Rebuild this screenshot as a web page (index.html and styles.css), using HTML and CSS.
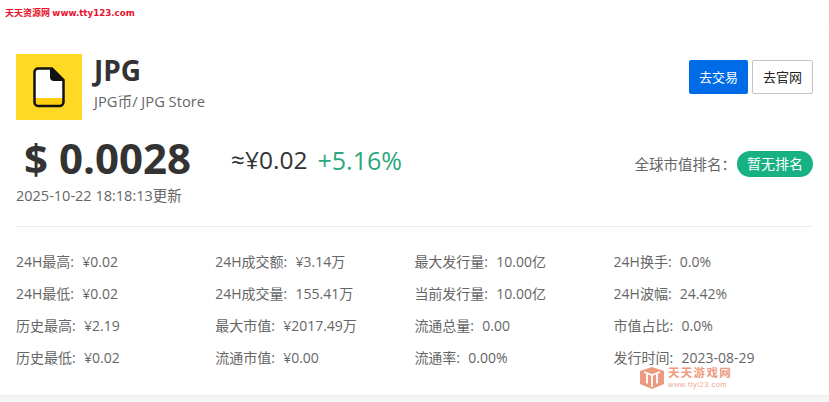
FILE: index.html
```html
<!DOCTYPE html>
<html lang="zh-CN">
<head>
  <meta charset="UTF-8">
  <meta name="viewport" content="width=device-width, initial-scale=1.0">
  <title>JPG币</title>
  <link rel="stylesheet" href="styles.css">
</head>
<body>
  <div class="site-mark"><span class="site-name">天天资源网</span> <span class="site-url">www.tty123.com</span></div>
  <div class="card">
    <div class="head">
      <div class="coin-logo">
        <svg width="32" height="41" viewBox="0 0 32 41">
          <path d="M5 1.500H19L30.500 13V35a4 4 0 0 1-4 4H5a3.500 3.500 0 0 1-3.500-3.500V5A3.500 3.500 0 0 1 5 1.500Z" fill="#fff"/>
          <path d="M2 31H30.500V35a4 4 0 0 1-4 4H5a3.500 3.500 0 0 1-3.500-3.500Z" fill="#ffcf0f"/>
          <path d="M17 1.500H19L30.500 13V14H21a4 4 0 0 1-4-4Z" fill="#111"/>
          <path d="M5 1.500H19L30.500 13V35a4 4 0 0 1-4 4H5a3.500 3.500 0 0 1-3.500-3.500V5A3.500 3.500 0 0 1 5 1.500Z" fill="none" stroke="#111" stroke-width="2.500"/>
        </svg>
      </div>
      <div class="coin-name">
        <h1>JPG</h1>
        <p>JPG币/ JPG Store</p>
      </div>
      <div class="actions">
        <a class="btn btn-primary">去交易</a>
        <a class="btn btn-plain">去官网</a>
      </div>
    </div>
    <div class="price-row">
      <span class="price">$ 0.0028</span>
      <span class="cny">≈¥0.02</span>
      <span class="change">+5.16%</span>
      <span class="rank">全球市值排名：<span class="rank-tag">暂无排名</span></span>
    </div>
    <div class="update-time">2025-10-22 18:18:13更新</div>
    <div class="stats">
      <div>24H最高:&nbsp; ¥0.02</div>
      <div>24H成交额:&nbsp; ¥3.14万</div>
      <div>最大发行量:&nbsp; 10.00亿</div>
      <div>24H换手:&nbsp; 0.0%</div>
      <div>24H最低:&nbsp; ¥0.02</div>
      <div>24H成交量:&nbsp; 155.41万</div>
      <div>当前发行量:&nbsp; 10.00亿</div>
      <div>24H波幅:&nbsp; 24.42%</div>
      <div>历史最高:&nbsp; ¥2.19</div>
      <div>最大市值:&nbsp; ¥2017.49万</div>
      <div>流通总量:&nbsp; 0.00</div>
      <div>市值占比:&nbsp; 0.0%</div>
      <div>历史最低:&nbsp; ¥0.02</div>
      <div>流通市值:&nbsp; ¥0.00</div>
      <div>流通率:&nbsp; 0.00%</div>
      <div>发行时间:&nbsp; 2023-08-29</div>
    </div>
  </div>
  <div class="game-mark">
    <svg width="24" height="22" viewBox="0 0 24 22">
      <path d="M12 0L24 4V17L12 22L0 17V4Z" fill="#eb9a80"/>
      <path d="M4 5L12 8L20 5M7 6.500V16.500M12 8V20M17 6.500V16.500" fill="none" stroke="#fff" stroke-width="1.800"/>
    </svg>
    <div class="game-text">
      <div class="game-name">天天游戏网</div>
      <div class="game-url">www.ttyl23.com</div>
    </div>
  </div>
</body>
</html>
```

FILE: styles.css
```css
body {
  margin: 0;
  background-color: #f6f6f6;
  font-family: 'Open Sans', 'Noto Sans CJK SC', sans-serif;
  color: #666;
  height: 402px;
  overflow: hidden;
  position: relative;
}
.site-mark {
  background-color: #fff;
  height: 27px;
  padding: 6px 0 0 5px;
  box-sizing: border-box;
  font-size: 9px;
  line-height: 14px;
  font-weight: 700;
  color: #e8102a;
}
.site-url {
  font-family: 'DejaVu Sans', sans-serif;
  font-size: 8.700px;
}
.card {
  background-color: #fff;
  height: 368px;
  box-sizing: border-box;
  padding: 27px 16px 0;
  box-shadow: 0 1px 3px rgba(0, 0, 0, 0.06);
}
.head {
  display: flex;
  align-items: flex-start;
}
.coin-logo {
  width: 66px;
  height: 66px;
  background-color: #ffd923;
  display: flex;
  align-items: center;
  justify-content: center;
}
.coin-name {
  margin-left: 12px;
  flex: 1;
}
.coin-name h1 {
  margin: -2px 0 0;
  font-size: 28px;
  line-height: 36px;
  font-weight: 700;
  color: #333;
}
.coin-name p {
  margin: 3px 0 0;
  font-size: 14.700px;
  line-height: 20px;
}
.actions {
  display: flex;
  gap: 4px;
  margin-top: 6px;
}
.btn {
  height: 34px;
  line-height: 34px;
  font-size: 13px;
  text-align: center;
  border-radius: 2px;
}
.btn-primary {
  width: 59px;
  background-color: #006be6;
  color: #fff;
}
.btn-plain {
  width: 59px;
  height: 32px;
  line-height: 32px;
  border: 1px solid #c4c4c4;
  color: #222;
}
.price-row {
  display: flex;
  align-items: center;
  height: 57px;
  margin-top: 9px;
}
.price {
  font-size: 42px;
  line-height: 46px;
  font-weight: 700;
  color: #333;
  margin-left: 8px;
}
.cny {
  font-size: 24.500px;
  color: #333;
  margin: 4px 0 0 40px;
}
.change {
  font-size: 25px;
  color: #2ba77e;
  margin: 4px 0 0 10px;
}
.rank {
  margin: 12px 0 0 auto;
  font-size: 14.500px;
  display: flex;
  align-items: center;
}
.rank-tag {
  background-color: #17b183;
  color: #fff;
  font-size: 14px;
  border-radius: 13px;
  height: 26px;
  line-height: 26px;
  padding: 0 10px;
  margin-left: 1px;
}
.update-time {
  font-size: 14.500px;
  line-height: 20px;
  padding-bottom: 20px;
  border-bottom: 1px solid #eee;
}
.stats {
  display: grid;
  grid-template-columns: repeat(4, 199.200px);
  grid-auto-rows: 32px;
  margin-top: 19px;
  font-size: 14px;
  line-height: 32px;
  word-spacing: 0.500px;
}
.game-mark {
  position: absolute;
  left: 640px;
  top: 367px;
  display: flex;
  gap: 4px;
  align-items: flex-start;
}
.game-name {
  font-family: 'Liberation Sans', 'Noto Sans CJK SC', sans-serif;
  font-size: 11.500px;
  line-height: 13px;
  font-weight: 700;
  color: #ec9a80;
  letter-spacing: 1.300px;
}
.game-url {
  font-family: 'Liberation Sans', sans-serif;
  font-size: 7.500px;
  line-height: 9px;
  color: #eca68f;
  letter-spacing: 0.500px;
}
```
